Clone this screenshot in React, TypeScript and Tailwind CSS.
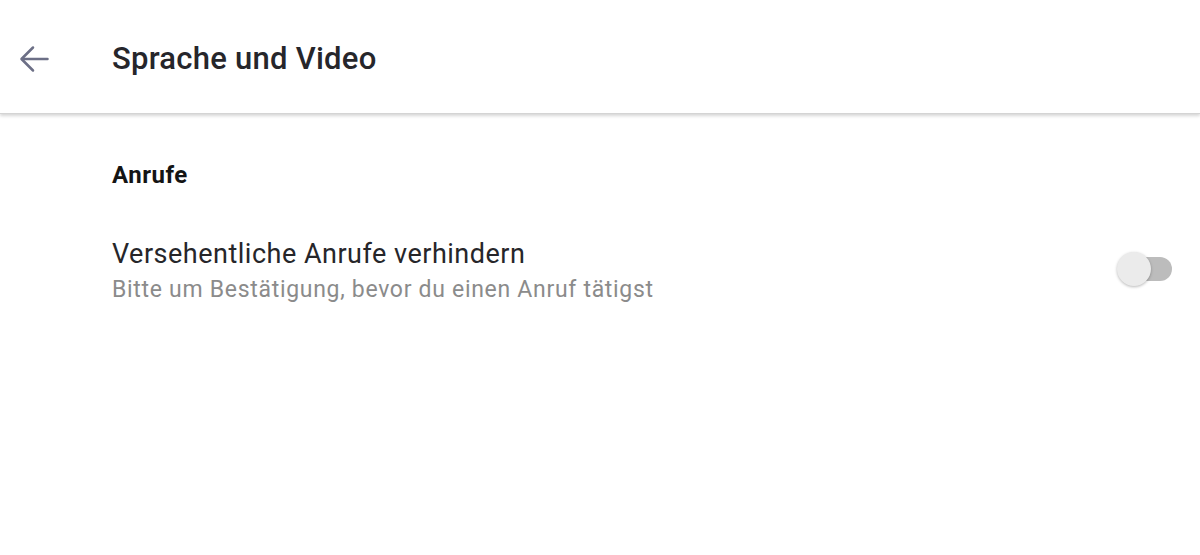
import React from 'react';

function BackArrow() {
  return (
    <svg width="32" height="32" viewBox="0 0 32 32" fill="none" stroke="#6c6f86" strokeWidth="2.5" strokeLinecap="round" strokeLinejoin="round">
      <path d="M29.5 16H4.5" />
      <path d="M15 4.5L3.5 16L15 27.5" />
    </svg>
  );
}

export default function App() {
  const [on, setOn] = React.useState(false);
  return (
    <div className="w-[1200px] h-[555px] bg-white overflow-hidden" style={{ fontFamily: 'Roboto, "Noto Sans", sans-serif' }}>
      <header className="h-[114px] flex items-center shadow-[0_2px_3px_rgba(0,0,0,0.16)] border-b border-[#d4d4d4] relative z-10">
        <div className="w-[112px] pl-[18px] pt-[4px] flex items-center">
          <BackArrow />
        </div>
        <h1 className="text-[31px] leading-[36px] pt-[4px] font-medium tracking-[0.25px] text-[#26262b]">Sprache und Video</h1>
      </header>
      <main className="pl-[112px] pr-[28px]">
        <div className="pt-[45px] text-[24px] leading-[32px] font-bold tracking-[0.5px] text-[#141414]">Anrufe</div>
        <div className="mt-[46px] flex items-center justify-between">
          <div>
            <div className="text-[27px] leading-[34px] tracking-[0.5px] text-[#26262a]">Versehentliche Anrufe verhindern</div>
            <div className="mt-[4px] text-[23px] leading-[30px] tracking-[0.7px] text-[#8b8b8b]">Bitte um Bestätigung, bevor du einen Anruf tätigst</div>
          </div>
          <button onClick={() => setOn(!on)} className="relative w-[58px] h-[36px] -mt-[4px] flex items-center">
            <span className="absolute right-0 w-[46px] h-[24px] rounded-full bg-[#bcbcbc]" />
            <span className="absolute left-[3px] w-[34px] h-[34px] rounded-full bg-[#ebebeb] shadow-[0_1px_3px_rgba(0,0,0,0.28)]" />
          </button>
        </div>
      </main>
    </div>
  );
}
